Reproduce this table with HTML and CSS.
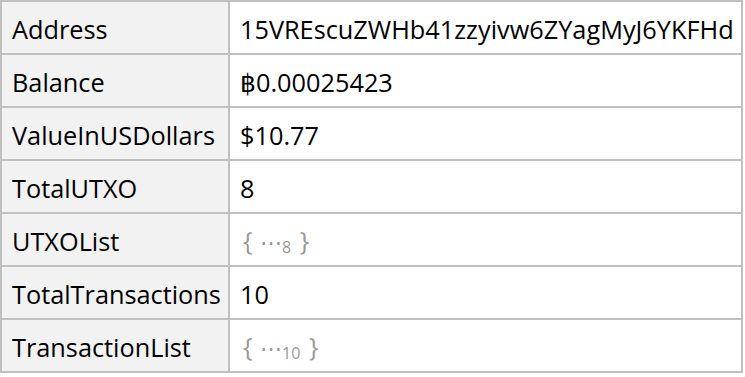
FILE: index.html
```html
<!DOCTYPE html>
<html>
<head>
<meta charset="utf-8">
<link rel="stylesheet" href="styles.css">
</head>
<body>
<table class="assoc">
  <tr><th>Address</th><td>15VREscuZWHb41zzyivw6ZYagMyJ6YKFHd</td></tr>
  <tr><th>Balance</th><td>฿0.00025423</td></tr>
  <tr><th>ValueInUSDollars</th><td>$10.77</td></tr>
  <tr><th>TotalUTXO</th><td>8</td></tr>
  <tr><th>UTXOList</th><td><span class="elided">{ <span class="dots">⋯</span><sub>8</sub> }</span></td></tr>
  <tr><th>TotalTransactions</th><td>10</td></tr>
  <tr><th>TransactionList</th><td><span class="elided">{ <span class="dots">⋯</span><sub>10</sub> }</span></td></tr>
</table>
</body>
</html>
```
FILE: styles.css
```css
html, body {
  margin: 0;
  padding: 0;
  background: #fff;
}
.assoc {
  border-collapse: collapse;
  font-family: "Open Sans", "Noto Sans", sans-serif;
  font-size: 25.3px;
  line-height: 30px;
  color: #000;
  width: 743px;
}
.assoc th,
.assoc td {
  border: 2px solid #c0c0c0;
  height: 51px;
  padding: 2px 0 0 10px;
  box-sizing: border-box;
  text-align: left;
  white-space: nowrap;
  font-weight: normal;
}
.assoc th {
  background: #f2f2f2;
  width: 228px;
}
.assoc tr { height: 53px; }
.elided {
  color: #999;
  padding-left: 3px;
}
.elided sub {
  font-size: 16px;
  line-height: 0;
  vertical-align: -3px;
  padding-right: 2px;
}
.elided .dots {
  font-size: 22px;
  padding-left: 1px;
}
```
